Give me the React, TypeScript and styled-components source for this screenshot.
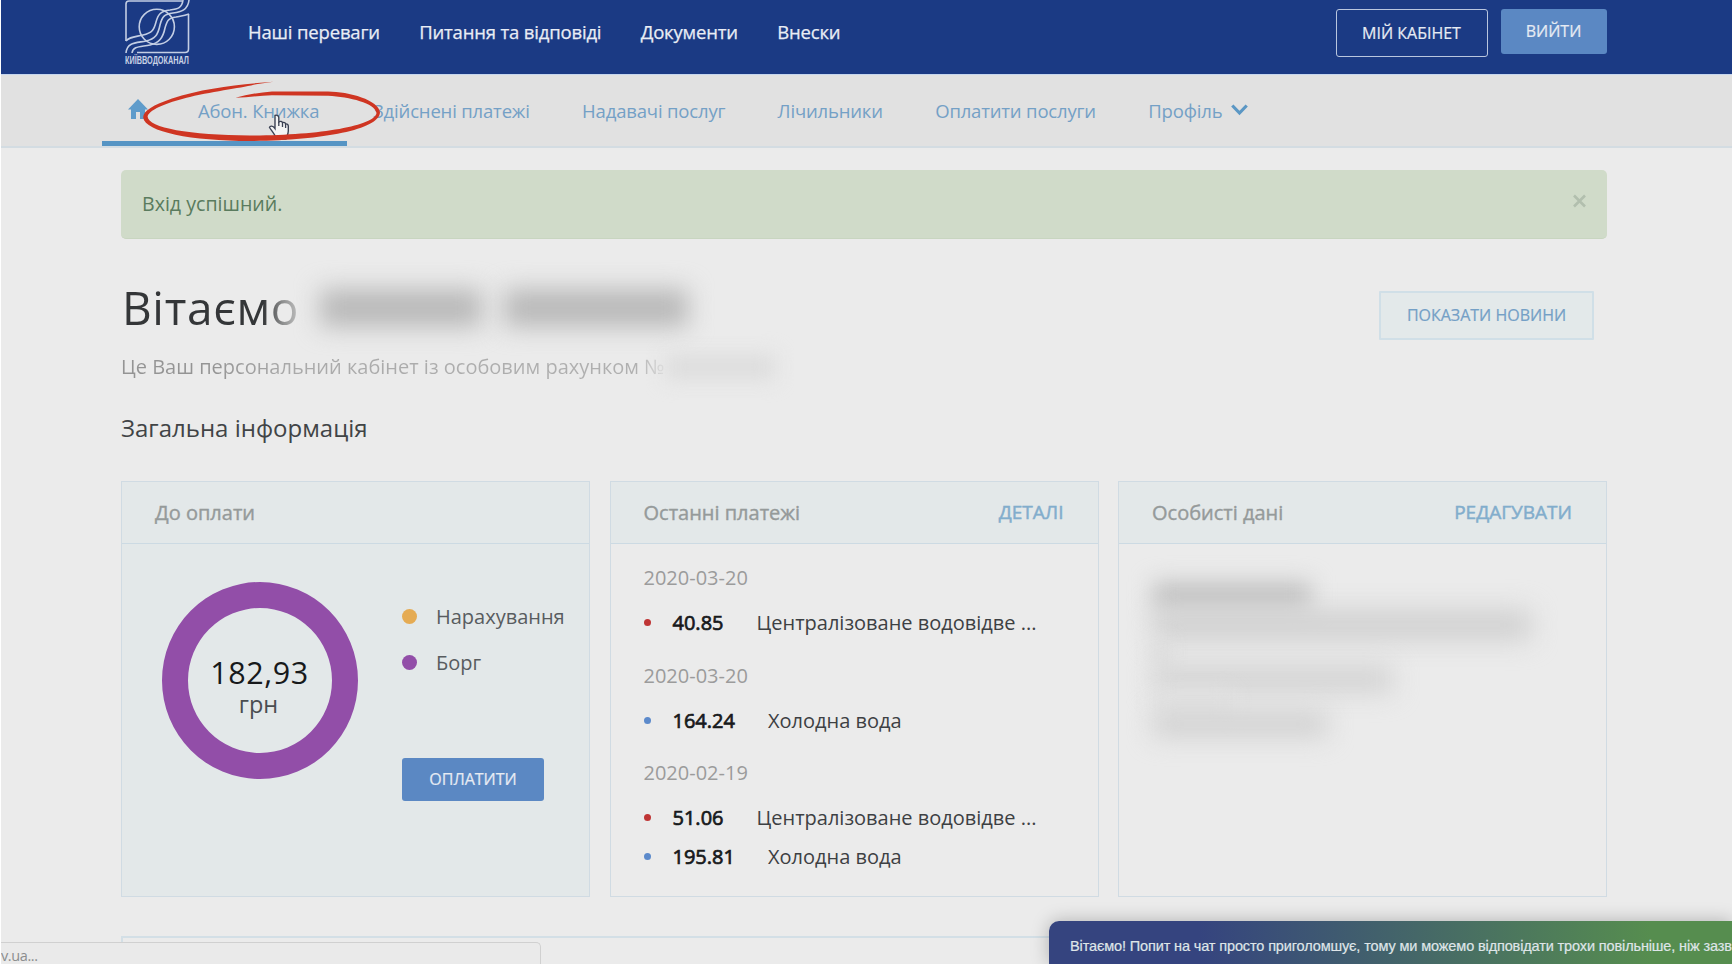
import styled, { createGlobalStyle } from "styled-components";

const GlobalStyle = createGlobalStyle`
  * {
    box-sizing: border-box;
  }
  body {
    margin: 0;
    background-color: #ebebeb;
    font-family: "Open Sans", "Noto Sans", sans-serif;
  }
  h1, h2, h3, p {
    margin: 0;
    font-weight: 400;
  }
`;

const Page = styled.div`
  position: relative;
  width: 1732px;
  height: 964px;
  overflow: hidden;
  border-left: 1px solid #fff;
  background-color: #ebebeb;
  color: #3a3d40;
`;

const Header = styled.header`
  display: flex;
  align-items: flex-start;
  height: 75px;
  padding-left: 124px;
  padding-right: 125.5px;
  background-color: #1b3a84;
  border-bottom: 1px solid #c6d6ee;
`;

const Logo = styled.svg`
  flex: none;
  margin-right: 58px;
  overflow: visible;
`;

const TopNav = styled.nav`
  display: flex;
  flex: 1;
  gap: 39.3px;
  line-height: 26px;
  padding-top: 19px;
`;

const TopLink = styled.a`
  color: #e9edf5;
  font-size: 18.5px;
  letter-spacing: -0.17px;
  white-space: nowrap;
  -webkit-text-stroke: 0.25px #e9edf5;
`;

const HeaderButtons = styled.div`
  display: flex;
  align-items: flex-start;
  gap: 13px;
  padding-top: 9px;
`;

const Button = styled.button<{
  $width: number;
  $height: number;
  $kind: "outline" | "solid" | "light";
}>`
  width: ${(p) => p.$width}px;
  height: ${(p) => p.$height}px;
  padding: 0 0 1px;
  font-family: inherit;
  font-size: 16px;
  white-space: nowrap;
  border-radius: ${(p) => (p.$kind === "light" ? 1 : 3)}px;
  border: ${(p) =>
    ({ outline: "1.5px solid #b9c6df", solid: "none", light: "2px solid #d0dfe7" })[p.$kind]};
  background-color: ${(p) =>
    ({ outline: "transparent", solid: "#5b88c3", light: "#e3e9ea" })[p.$kind]};
  color: ${(p) => (p.$kind === "light" ? "#74a0c6" : "#e6ebf3")};
  -webkit-text-stroke: 0.2px currentColor;
`;

const SubNav = styled.nav`
  display: flex;
  height: 73px;
  padding-left: 100.5px;
  background-color: #e1e1e1;
  border-bottom: 2px solid #d3dce2;
`;

const ActiveTab = styled.div`
  display: flex;
  width: 245px;
  height: 71px;
  padding: 24px 0 0 26.5px;
  border-bottom: 5px solid #5594c4;
`;

const HomeIcon = styled.svg`
  margin-right: 50px;
`;

const SubLinks = styled.div`
  display: flex;
  gap: 52.3px;
  padding: 22px 0 0 26.5px;
`;

const SubLink = styled.a`
  display: flex;
  align-items: center;
  gap: 9px;
  height: 26px;
  color: #74a0c6;
  font-size: 18.5px;
  letter-spacing: -0.17px;
  white-space: nowrap;

  ${ActiveTab} & {
    height: 22px;
  }
`;

const Main = styled.main`
  width: 1486px;
  margin-left: 120px;
  padding-top: 21.5px;
`;

const Alert = styled.div`
  display: flex;
  align-items: center;
  justify-content: space-between;
  height: 69px;
  padding: 0 21px;
  border-radius: 5px;
  background-color: #d0dbc9;
  border-bottom: 1px solid #c8d5c0;
  color: #5a7b5e;
  font-size: 19.6px;
`;

const Welcome = styled.section`
  display: flex;
  justify-content: space-between;
  height: 160px;
  padding-right: 13px;
`;

const Greeting = styled.div`
  display: flex;
  align-items: center;
  height: 64px;
  margin-top: 36px;
`;

const Title = styled.h1`
  width: 179px;
  padding-left: 1px;
  font-size: 46px;
  line-height: 64px;
  letter-spacing: 0.65px;
  color: transparent;
  background: linear-gradient(90deg, #343638 142px, #8f9090 162px, #c4c4c4 179px);
  background-clip: text;
`;

const Smudge = styled.span<{ $width: number; $height: number; $color?: string; $blur?: number }>`
  display: block;
  flex: none;
  width: ${(p) => p.$width}px;
  height: ${(p) => p.$height}px;
  background-color: ${(p) => p.$color ?? "#d0d0d0"};
  filter: blur(${(p) => p.$blur ?? 10}px);
`;

const HiddenName = styled.div`
  display: flex;
  gap: 22px;
  margin-left: 20px;
  padding-top: 3px;
`;

const Account = styled.div`
  display: flex;
  align-items: center;
  height: 28px;
  margin-top: 14px;
`;

const AccountText = styled.p`
  font-size: 20px;
  line-height: 28px;
  white-space: nowrap;
  color: transparent;
  background: linear-gradient(90deg, #949494 90px, #aaaaaa 170px, #b0b0b0 515px, #dddddd 545px);
  background-clip: text;
`;

const NewsButton = styled.div`
  padding-top: 52px;
`;

const SectionTitle = styled.h2`
  height: 82.5px;
  padding-top: 12.5px;
  font-size: 24px;
  line-height: 34px;
  color: #414446;
`;

const Cards = styled.div`
  display: grid;
  grid-template-columns: 469px 489px 489px;
  gap: 19.5px;
  margin-bottom: 39px;
`;

const Card = styled.section<{ $tinted?: boolean }>`
  height: 416px;
  border: 1.5px solid #d0dbe3;
  background-color: ${(p) => (p.$tinted ? "#e3e8e9" : "#ebebeb")};
`;

const CardHeader = styled.header`
  display: flex;
  align-items: center;
  justify-content: space-between;
  height: 62px;
  padding: 0 34px 1px 33px;
  border-bottom: 1.5px solid #ccdae3;
  background-color: #e3e8e9;
`;

const CardTitle = styled.h3`
  font-size: 20px;
  color: #959a9a;
  -webkit-text-stroke: 0.4px #959a9a;
`;

const CardLink = styled.a`
  font-size: 19px;
  color: #82adcc;
  -webkit-text-stroke: 0.5px #82adcc;
`;

const Balance = styled.div`
  display: flex;
  padding: 38px 0 0 39.5px;
`;

const Donut = styled.div`
  display: flex;
  flex-direction: column;
  align-items: center;
  width: 196px;
  height: 197px;
  padding-top: 46px;
  border: 26px solid #924ea8;
  border-radius: 50%;
`;

const Amount = styled.div`
  height: 38px;
  font-size: 30.5px;
  line-height: 36px;
  letter-spacing: 0.6px;
  color: #17191b;
`;

const Currency = styled.div`
  margin-right: 2px;
  font-size: 23.5px;
  line-height: 24px;
  color: #4a4d50;
`;

const BalanceInfo = styled.div`
  margin-left: 44.5px;
  padding-top: 20px;
`;

const LegendItem = styled.div<{ $color: string }>`
  display: flex;
  align-items: center;
  height: 28px;
  margin-bottom: 18px;
  font-size: 20px;
  color: #585c5f;
  &::before {
    content: "";
    width: 15px;
    height: 15px;
    margin-right: 19px;
    border-radius: 50%;
    background-color: ${(p) => p.$color};
  }
`;

const PayWrapper = styled.div`
  padding-top: 64px;
`;

const Payments = styled.div`
  padding: 20px 0 0 33px;
`;

const PaymentGroup = styled.div`
  margin-bottom: 19.5px;
`;

const PaymentDate = styled.p`
  height: 39px;
  font-size: 20px;
  line-height: 27px;
  color: #9b9b9b;
`;

const PaymentRow = styled.div<{ $color: string }>`
  display: flex;
  align-items: center;
  height: 39px;
  font-size: 20px;
  color: #3d4043;
  white-space: nowrap;
  &::before {
    content: "";
    width: 7px;
    height: 7px;
    margin-right: 22px;
    border-radius: 50%;
    background-color: ${(p) => p.$color};
  }
`;

const PaymentSum = styled.span`
  margin-right: 33px;
  color: #17191b;
  -webkit-text-stroke: 0.7px #17191b;
`;

const PersonalData = styled.div`
  padding: 38px 0 0 34px;
`;

const NextPanel = styled.div`
  height: 60px;
  border: 2px solid #d3dfe6;
`;

const StatusBar = styled.div`
  position: absolute;
  left: -1px;
  bottom: 0;
  width: 541px;
  height: 22px;
  padding: 5px 0 0 1px;
  background-color: #eaeaea;
  border: 1px solid #d0d0d0;
  border-bottom: none;
  border-left: none;
  border-radius: 0 5px 0 0;
  font-size: 14.5px;
  line-height: 16px;
  letter-spacing: -0.4px;
  color: #8b8d8e;
`;

const ChatBar = styled.div`
  position: absolute;
  left: 1048px;
  bottom: 0;
  width: 683px;
  height: 43px;
  padding: 15px 0 0 21px;
  border-radius: 10px 0 0 0;
  background: linear-gradient(90deg, #35447f 22%, #568d4f 88%);
  box-shadow: 0 0 18px rgba(0, 0, 0, 0.25);
  font-family: "Liberation Sans", Arial, sans-serif;
  font-size: 14.5px;
  line-height: 20px;
  letter-spacing: -0.13px;
  white-space: nowrap;
  color: #dfe5e8;
  -webkit-text-stroke: 0.2px #dfe5e8;
`;

const Marker = styled.svg`
  position: absolute;
  left: 129px;
  top: 75px;
  pointer-events: none;
`;

const payments = [
  { date: "2020-03-20", rows: [{ sum: "40.85", name: "Централізоване водовідве ...", color: "#bf3535" }] },
  { date: "2020-03-20", rows: [{ sum: "164.24", name: "Холодна вода", color: "#5c8acb" }] },
  {
    date: "2020-02-19",
    rows: [
      { sum: "51.06", name: "Централізоване водовідве ...", color: "#bf3535" },
      { sum: "195.81", name: "Холодна вода", color: "#5c8acb" },
    ],
  },
];

function CompanyLogo() {
  return (
    <Logo width="65" height="68" viewBox="0 0 65 68" fill="none" stroke="#c3cee4" strokeWidth="1.6">
      <path d="M1 41V4Q1 1 4 1H57" />
      <path d="M12 52.5H60Q63.5 52.5 63.5 49V14" />
      <circle cx="31.8" cy="26.8" r="17.6" />
      <path d="M58 0C57 8 53 9 45 10C35 11 33 15 31 22C29 30 27 33 18 35C9 37 4 37 1 41" />
      <path d="M64 0C63 10 56 12 48 13C39 14 37 17 35 25C33 35 30 39 21 41C11 43 2 42 1 53" />
      <path d="M64 14C58 16 55 16 51 17C43 18 42 21 40 28C38 38 34 43 25 45C15 47 8 46 7 53" />
      <text
        x="0"
        y="64"
        textLength="64"
        lengthAdjust="spacingAndGlyphs"
        fill="#c9d3e6"
        stroke="none"
        fontFamily="Liberation Sans"
        fontWeight="700"
        fontSize="11"
      >
        КИЇВВОДОКАНАЛ
      </text>
    </Logo>
  );
}

export default function App() {
  return (
    <>
      <GlobalStyle />
      <Page>
        <Header>
          <CompanyLogo />
          <TopNav>
            <TopLink>Наші переваги</TopLink>
            <TopLink>Питання та відповіді</TopLink>
            <TopLink>Документи</TopLink>
            <TopLink>Внески</TopLink>
          </TopNav>
          <HeaderButtons>
            <Button $width={152} $height={48} $kind="outline">
              МІЙ КАБІНЕТ
            </Button>
            <Button $width={106} $height={45} $kind="solid">
              ВИЙТИ
            </Button>
          </HeaderButtons>
        </Header>

        <SubNav>
          <ActiveTab>
            <HomeIcon width="20" height="20" viewBox="0 0 20 20" fill="#5f9ccb">
              <path d="M10 0L20 10.5H17V20H12V13H8V20H3V10.5H0Z" />
            </HomeIcon>
            <SubLink>Абон. Книжка</SubLink>
          </ActiveTab>
          <SubLinks>
            <SubLink>Здійснені платежі</SubLink>
            <SubLink>Надавачі послуг</SubLink>
            <SubLink>Лічильники</SubLink>
            <SubLink>Оплатити послуги</SubLink>
            <SubLink>
              Профіль
              <svg width="17" height="12" viewBox="0 0 17 12" fill="none" stroke="#5b97c4" strokeWidth="3.2">
                <path d="M1.3 1.5L8.5 9L15.7 1.5" />
              </svg>
            </SubLink>
          </SubLinks>
        </SubNav>

        <Main>
          <Alert>
            Вхід успішний.
            <svg width="13" height="19" viewBox="0 0 13 19" stroke="#b2bfae" strokeWidth="2.6">
              <path d="M1 1.5L12 12.5M12 1.5L1 12.5" />
            </svg>
          </Alert>

          <Welcome>
            <div>
              <Greeting>
                <Title>Вітаємо</Title>
                <HiddenName>
                  <Smudge $width={162} $height={38} $color="#b9b9b9" $blur={12} />
                  <Smudge $width={184} $height={38} $color="#b9b9b9" $blur={12} />
                </HiddenName>
              </Greeting>
              <Account>
                <AccountText>Це Ваш персональний кабінет із особовим рахунком №</AccountText>
                <Smudge $width={110} $height={24} $color="#dcdcdc" />
              </Account>
            </div>
            <NewsButton>
              <Button $width={215} $height={49} $kind="light">
                ПОКАЗАТИ НОВИНИ
              </Button>
            </NewsButton>
          </Welcome>

          <SectionTitle>Загальна інформація</SectionTitle>

          <Cards>
            <Card $tinted>
              <CardHeader>
                <CardTitle>До оплати</CardTitle>
              </CardHeader>
              <Balance>
                <Donut>
                  <Amount>182,93</Amount>
                  <Currency>грн</Currency>
                </Donut>
                <BalanceInfo>
                  <LegendItem $color="#e5ab53">Нарахування</LegendItem>
                  <LegendItem $color="#924ea8">Борг</LegendItem>
                  <PayWrapper>
                    <Button $width={142} $height={43} $kind="solid">
                      ОПЛАТИТИ
                    </Button>
                  </PayWrapper>
                </BalanceInfo>
              </Balance>
            </Card>

            <Card>
              <CardHeader>
                <CardTitle>Останні платежі</CardTitle>
                <CardLink>ДЕТАЛІ</CardLink>
              </CardHeader>
              <Payments>
                {payments.map((group, i) => (
                  <PaymentGroup key={i}>
                    <PaymentDate>{group.date}</PaymentDate>
                    {group.rows.map((row) => (
                      <PaymentRow key={row.sum} $color={row.color}>
                        <PaymentSum>{row.sum}</PaymentSum>
                        {row.name}
                      </PaymentRow>
                    ))}
                  </PaymentGroup>
                ))}
              </Payments>
            </Card>

            <Card>
              <CardHeader>
                <CardTitle>Особисті дані</CardTitle>
                <CardLink>РЕДАГУВАТИ</CardLink>
              </CardHeader>
              <PersonalData>
                <Smudge $width={158} $height={28} $color="#c2c2c2" $blur={11} />
                <Smudge $width={378} $height={30} $color="#d0d0d0" $blur={13} />
                <Smudge $width={16} $height={26} $color="#dadada" />
                <Smudge $width={240} $height={26} $color="#d2d2d2" $blur={13} />
                <Smudge $width={80} $height={20} $color="#e2e2e2" />
                <Smudge $width={174} $height={24} $color="#cfcfcf" $blur={13} />
              </PersonalData>
            </Card>
          </Cards>

          <NextPanel />
        </Main>

        <StatusBar>v.ua...</StatusBar>
        <ChatBar>Вітаємо! Попит на чат просто приголомшує, тому ми можемо відповідати трохи повільніше, ніж зазв</ChatBar>

        <Marker width="260" height="72" viewBox="130 75 260 72">
          <path
            d="M275 115.5C277 114.5 278.8 116 278.8 117.5V122C280.5 120.7 282 121.5 282.5 122.7C284 121.9 285.5 122.8 285.6 124C287 123.6 288.3 124.6 288.3 126V131C288.3 134 287 136 286 139H276.5C275 134 271 130 269.5 127.5C270 125.5 272.8 125.5 275 128.5Z"
            fill="#f4f4f4"
            stroke="#3c4254"
            strokeWidth="1.4"
          />
          <path d="M278.8 122V126M282.5 122.7V127M285.6 124V128" stroke="#3c4254" strokeWidth="1.3" />
          <path
            d="M273.5 81.7C240 84.2 203 88 172 98.500C153 105 143 111 143.200 117.500C145 132 192 141 250 141C320 140.500 379 130 380 112.500C379 100 349 91.700 328 91.500L272 91.500C258 92.500 246 95 235.500 97.800C248 97.500 260 95.500 272 95.300L328 95.700C350 97 375 103 376.500 113C375 126 318 135.500 250 135.500C190 135 148 128 147.600 116.500C149 109 172 101 190 97C215 91 245 87.500 256 84.300Z"
            fill="#cf3522"
          />
        </Marker>
      </Page>
    </>
  );
}
